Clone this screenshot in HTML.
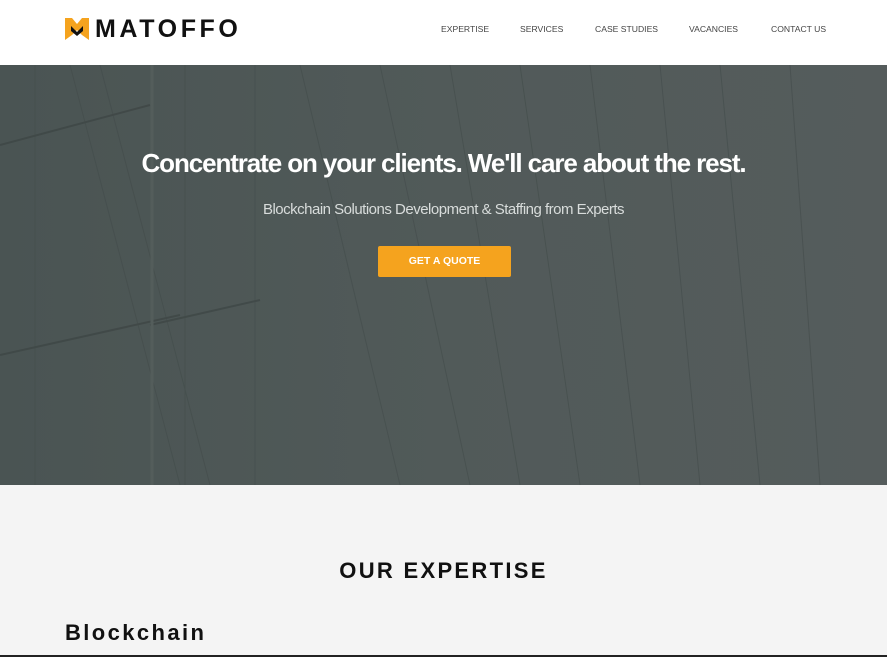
<!DOCTYPE html>
<html><head><style>
body{margin:0;width:887px;height:657px;overflow:hidden;font-family:"Liberation Sans",sans-serif;background:#f4f4f4;position:relative}
.hdr{position:absolute;top:0;left:0;width:887px;height:65px;background:#fff}
.logo{position:absolute;left:65px;top:16px;font-size:25px;font-weight:bold;letter-spacing:3.6px;color:#111;line-height:26px}
.logo svg{position:absolute;left:0;top:2px}
.logo span{margin-left:30px}
.nav{position:absolute;top:24px;font-size:8.6px;color:#444;letter-spacing:0}
.hero{position:absolute;top:65px;left:0;width:887px;height:420px;background:linear-gradient(90deg,#4a5453 0%,#515a59 50%,#555c5c 100%);overflow:hidden}
h1{position:absolute;top:148px;left:0;width:887px;text-align:center;margin:0;color:#fff;font-size:26px;letter-spacing:-1.1px;font-weight:bold}
.sub{position:absolute;top:201px;width:887px;text-align:center;color:#d8dcdb;font-size:15px;letter-spacing:-0.5px}
.btn{position:absolute;left:378px;top:246px;width:133px;height:31px;background:#f5a31e;border-radius:2px;color:#fff;font-size:10.5px;font-weight:bold;text-align:center;line-height:31px}
h2{position:absolute;top:558px;width:887px;text-align:center;margin:0;font-size:22px;letter-spacing:2.3px;color:#111}
h3{position:absolute;top:620px;left:65px;margin:0;font-size:22px;letter-spacing:2.4px;color:#111}
.bl{position:absolute;top:655px;left:0;width:887px;height:2px;background:#222}
</style></head><body>
<div class="hdr">
<div class="logo"><svg width="24" height="22" viewBox="0 0 24 22"><path d="M0 0H7L12 6L17 0H24V22L17 17L12 12L7 17L0 22Z" fill="#f5a31e"/><path d="M6 8L12 14L18 8L18 13L12 18L6 13Z" fill="#111"/></svg><span>MATOFFO</span></div>
<div class="nav" style="left:441px">EXPERTISE</div>
<div class="nav" style="left:520px">SERVICES</div>
<div class="nav" style="left:595px">CASE STUDIES</div>
<div class="nav" style="left:689px">VACANCIES</div>
<div class="nav" style="left:771px">CONTACT US</div>
</div>
<div class="hero">
<svg width="887" height="420" style="position:absolute;left:0;top:0" stroke="#434c4b" stroke-width="1" fill="none" opacity="0.6">
<path d="M35 0V420M70 0L180 420M100 0L210 420M185 0V420M255 0V420M300 0L400 420M380 0L470 420M450 0L520 420M520 0L580 420M590 0L640 420M660 0L700 420M720 0L760 420M790 0L820 420"/>
<path d="M0 80L150 40M0 290L180 250M150 260L260 235" stroke="#3a4241" stroke-width="2"/>
<path d="M152 0V420" stroke="#59625f" stroke-width="3"/>
</svg>
</div>
<h1>Concentrate on your clients. We'll care about the rest.</h1>
<div class="sub">Blockchain Solutions Development &amp; Staffing from Experts</div>
<div class="btn">GET A QUOTE</div>
<h2>OUR EXPERTISE</h2>
<h3>Blockchain</h3>
<div class="bl"></div>
</body></html>
